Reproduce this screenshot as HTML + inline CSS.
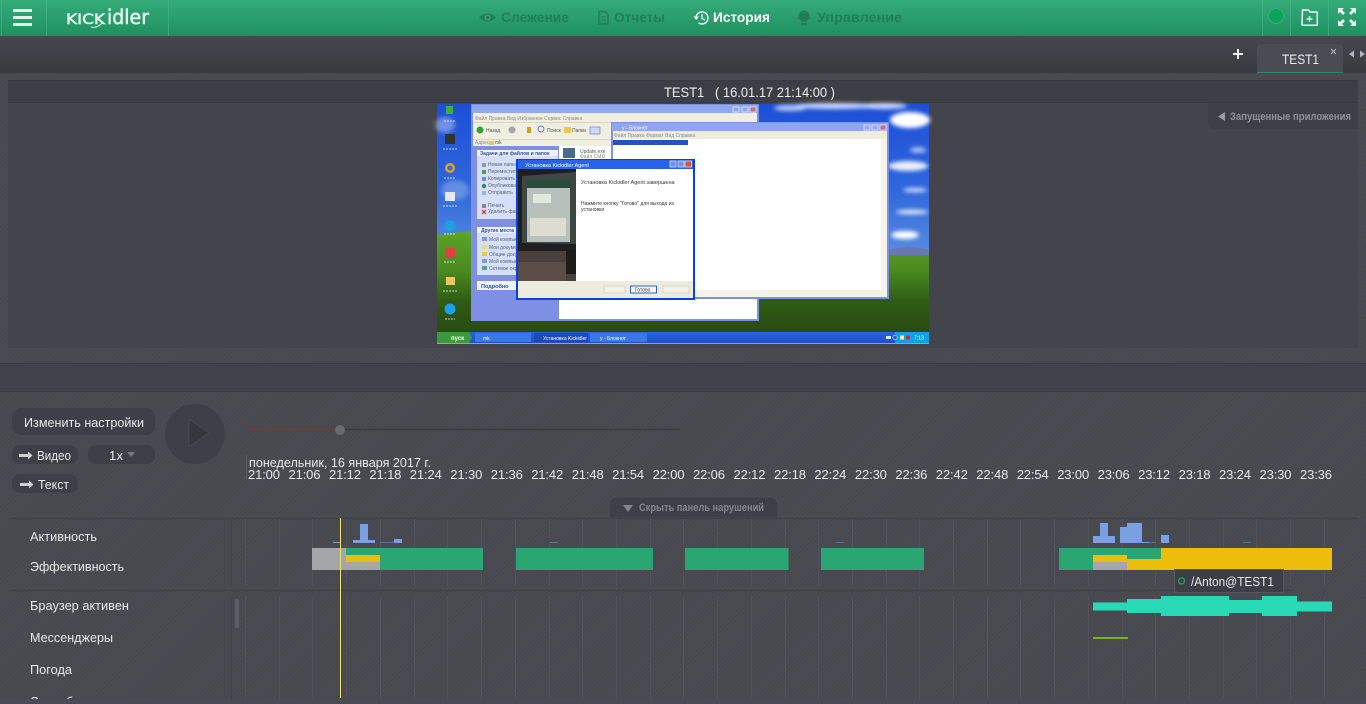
<!DOCTYPE html>
<html lang="ru"><head><meta charset="utf-8"><title>Kickidler</title>
<style>
html,body{margin:0;padding:0;width:1366px;height:704px;overflow:hidden;background:#4a4b53}
.a{position:absolute}
.st{background:#4a4b53 repeating-linear-gradient(135deg,#4b4c54 0 1px,#48494f 1px 3px)}
svg{position:absolute;left:0;top:0}
text{font-family:"Liberation Sans","DejaVu Sans",sans-serif;font-size:13px;fill:#e8e8ea}
.n{font-family:"Liberation Sans",sans-serif;font-weight:bold;font-size:14px;fill:#217f56}
.b{font-family:"Liberation Sans",sans-serif;font-weight:bold;font-size:11px}
.x{font-size:5px;fill:#223}
</style></head><body>
<div class="a st" style="left:0;top:0;width:1366px;height:704px"></div>
<div class="a" style="left:0;top:0;width:1366px;height:36px;background:linear-gradient(#35ab79,#1f9160)"></div>
<div class="a" style="left:0;top:36px;width:1366px;height:37px;background:linear-gradient(#47484f,#393a40)"></div>
<div class="a" style="left:8px;top:80px;width:1350px;height:23px;background:#3e3f46;border-top:1px solid #393a40;box-sizing:border-box;border-bottom:1px solid #393a40"></div>
<div class="a" style="left:8px;top:103px;width:1350px;height:245px;background:#44454c"></div>
<div class="a" style="left:0;top:363px;width:1366px;height:29px;background:#42434a;border-top:1px solid #3a3b41;border-bottom:1px solid #3c3d43;box-sizing:border-box"></div>

<svg width="1366" height="704" viewBox="0 0 1366 704">
<defs>
<linearGradient id="sky" x1="0" y1="0" x2="0" y2="1"><stop offset="0" stop-color="#1d4fd6"/><stop offset=".35" stop-color="#2f66dc"/><stop offset=".65" stop-color="#5a8fe0"/><stop offset="1" stop-color="#7fa6e0"/></linearGradient>
<linearGradient id="gr" x1="0" y1="0" x2="0" y2="1"><stop offset="0" stop-color="#5ea52a"/><stop offset=".4" stop-color="#4a8a20"/><stop offset=".7" stop-color="#2f5c14"/><stop offset="1" stop-color="#2a4a12"/></linearGradient>
<linearGradient id="tb" x1="0" y1="0" x2="0" y2="1"><stop offset="0" stop-color="#2a62e0"/><stop offset="1" stop-color="#1f4fc8"/></linearGradient>
<filter id="bl" x="-30%" y="-60%" width="160%" height="220%"><feGaussianBlur stdDeviation="2"/></filter>
</defs>

<!-- header -->
<path d="M1.5 0V36M46.5 0V36M168.5 0V36M1262.5 0V36M1290.5 0V36M1328.5 0V36" stroke="#4dba8b" stroke-opacity=".55"/>
<path d="M13 9h19v3H13zM13 16h19v3H13zM13 23h19v3H13z" fill="#e4f1ea"/>
<text x="66" y="24" style="font-family:'DejaVu Sans',sans-serif;font-size:14.5px;fill:#e4f2eb;stroke:#e4f2eb;stroke-width:.5" textLength="39" lengthAdjust="spacingAndGlyphs">KICK</text>
<text x="107" y="24" style="font-family:'DejaVu Sans',sans-serif;font-size:20px;fill:#e4f2eb;stroke:#e4f2eb;stroke-width:.5" textLength="42" lengthAdjust="spacingAndGlyphs">idler</text>
<path d="M91 27q6 2 12-5" stroke="#e4f2eb" fill="none"/>
<!-- nav -->
<path d="M479 17.500q8.500-8 17 0q-8.500 8-17 0z" fill="#217f56"/><circle cx="487.500" cy="17.500" r="3" fill="#35a877"/><circle cx="487.500" cy="17.500" r="1.700" fill="#217f56"/>
<text class="n" x="501" y="22" textLength="68" lengthAdjust="spacingAndGlyphs">Слежение</text>
<path d="M599 11.500h6l3 3v9.500h-9z" fill="none" stroke="#217f56" stroke-width="1.500"/><path d="M601 17h5M601 20h5" stroke="#217f56"/>
<text class="n" x="614" y="22" textLength="51" lengthAdjust="spacingAndGlyphs">Отчеты</text>
<path d="M696 18a6 6 0 1 1 2.500 4.800" fill="none" stroke="#fff" stroke-width="1.300"/><path d="M693.500 16.500h5.500l-2.700 3.500z" fill="#fff"/><path d="M702 14v4.500l3 1.500" fill="none" stroke="#fff" stroke-width="1.100"/>
<text class="n" style="fill:#fff" x="713" y="22" textLength="57" lengthAdjust="spacingAndGlyphs">История</text>
<circle cx="804" cy="17" r="5" fill="#217f56"/><path d="M798 17a6 6.500 0 0 1 12 0v2h-1.500v-2a4.500 5 0 0 0-9 0v2H798zM801 23h6v2h-6z" fill="#217f56"/>
<text class="n" x="817" y="22" textLength="85" lengthAdjust="spacingAndGlyphs">Управление</text>
<!-- right header -->
<circle cx="1276" cy="16" r="7.500" fill="#0ea35d" stroke="#2fb27d"/>
<path d="M1302.500 10h6l1.500 2h6.500a.8.8 0 0 1 .8.8v11.700a.8.8 0 0 1-.8.800h-13.700a.8.800 0 0 1-.8-.800z" fill="none" stroke="#f0f7f3" stroke-width="1.500"/>
<path d="M1309.500 16v6M1306.500 19h6" stroke="#fff" stroke-width="1.300"/>
<path d="M1338 8h6l-2 2 3 3-2 2-3-3-2 2zM1356 8h-6l2 2-3 3 2 2 3-3 2 2zM1338 26h6l-2-2 3-3-2-2-3 3-2-2zM1356 26h-6l2-2-3-3 2-2 3 3 2-2z" fill="#e8f3ed"/>

<!-- tabs -->
<path d="M1238 49v10M1233 54h10" stroke="#eee" stroke-width="2"/>
<path d="M1257 72V47a3 3 0 0 1 3-3h80a3 3 0 0 1 3 3v25z" fill="#4a4b53"/>
<path d="M1257 72.500h86" stroke="#2b8a63"/>
<text x="1282" y="64" textLength="37" lengthAdjust="spacingAndGlyphs" style="font-size:14px;fill:#eceded">TEST1</text>
<path d="M1331 49l5 5M1336 49l-5 5" stroke="#b8b9bd"/>
<path d="M1354 50.500v7l-5-3.500zM1360 50.500v7l5-3.500z" fill="#b5b6ba"/>
<text x="664" y="97" textLength="171" lengthAdjust="spacingAndGlyphs" style="font-size:14px;fill:#eee" xml:space="preserve">TEST1   ( 16.01.17 21:14:00 )</text>
<!-- running apps -->
<path d="M1208 103h150v26h-144a6 6 0 0 1-6-6z" fill="#3f4047"/>
<path d="M1225 112v9l-7-4.500z" fill="#9a9b9f"/>
<text class="b" style="fill:#909196" x="1230" y="120" textLength="121" lengthAdjust="spacingAndGlyphs">Запущенные приложения</text>

<!-- XP screen -->
<rect x="437" y="104" width="492" height="240" fill="url(#sky)"/>
<path d="M437 235q60-10 140 0t352 20v77H437z" fill="url(#gr)"/>
<g fill="#fff" filter="url(#bl)">
<ellipse cx="790" cy="108" rx="16" ry="3" opacity=".7"/><ellipse cx="835" cy="106" rx="40" ry="3" opacity=".8"/><ellipse cx="885" cy="106" rx="22" ry="3" opacity=".8"/><ellipse cx="910" cy="120" rx="20" ry="8"/>
<ellipse cx="918" cy="150" rx="8" ry="3" opacity=".6"/><ellipse cx="908" cy="166" rx="20" ry="5" opacity=".9"/><ellipse cx="915" cy="190" rx="12" ry="2.500" opacity=".7"/>
<ellipse cx="912" cy="212" rx="16" ry="2.500" opacity=".8"/><ellipse cx="905" cy="235" rx="14" ry="4"/>
<ellipse cx="445" cy="125" rx="10" ry="8" opacity=".35"/><ellipse cx="455" cy="190" rx="14" ry="10" opacity=".25"/>
</g>
<path d="M889 250q20-6 40 0v5h-40z" fill="#6a78b0"/>
<!-- desktop icons -->
<g>
<rect x="446" y="106" width="7" height="8" fill="#3fae3f"/><rect x="445" y="134" width="10" height="10" fill="#333"/><circle cx="450" cy="168" r="5" fill="#e0a020"/><circle cx="450" cy="168" r="2.500" fill="#2a70d8"/>
<rect x="445" y="192" width="10" height="9" fill="#e8e8f0"/><circle cx="450" cy="226" r="5.500" fill="#1ca0e0"/><rect x="445" y="248" width="10" height="10" fill="#e04040"/>
<rect x="446" y="277" width="9" height="8" fill="#e8c860"/><circle cx="450" cy="309" r="5.500" fill="#1ca0e8"/>
</g>
<path d="M444 121h12M443 149h14M444 178h12M443 206h14M444 234h12M444 262h12M443 291h14M445 319h10" stroke="#dfe8f8" stroke-opacity=".7" stroke-dasharray="2 1" stroke-width="1.200"/>
<!-- taskbar -->
<rect x="437" y="332" width="492" height="11" fill="url(#tb)"/>
<path d="M437 332h32l3 5.500-3 5.500h-32z" fill="#3c9a3c"/>
<text x="451" y="340" style="font-size:6px;font-weight:bold;fill:#fff">пуск</text>
<rect x="475" y="333" width="56" height="9" fill="#3a78e8"/><rect x="534" y="333" width="54" height="9" fill="#1c4ab8"/><rect x="590" y="333" width="57" height="9" fill="#3a78e8"/>
<rect x="895" y="332" width="34" height="11" fill="#11a0e8"/>
<text class="x" style="fill:#fff" x="483" y="340">mk</text><text class="x" style="fill:#fff" x="543" y="340">Установка Kickidler</text><text class="x" style="fill:#fff" x="600" y="340">y - Блокнот</text>
<rect x="886" y="336" width="5" height="3" fill="#dfe8f8"/><circle cx="895" cy="337.500" r="2.200" fill="#1a60c8" stroke="#cfe8ff" stroke-width=".6"/><rect x="900" y="335.500" width="4" height="4" fill="#f0f0a0"/><circle cx="908" cy="337.500" r="2" fill="#d82030"/>
<text class="x" style="fill:#fff" x="914" y="339.500">7:13</text>

<!-- explorer -->
<rect x="471" y="104" width="288" height="217" fill="#7f8fe4"/>
<rect x="472" y="105" width="286" height="8" fill="#8fa8ee"/>
<rect x="473" y="113" width="284" height="33" fill="#f0eee0"/>
<path d="M473 122.500h284M473 139.500h284" stroke="#d8d5c0"/>
<text class="x" x="475" y="120" style="fill:#889">Файл  Правка  Вид  Избранное  Сервис  Справка</text>
<circle cx="480" cy="130" r="3.500" fill="#30a030"/><circle cx="512" cy="130" r="3.500" fill="#a8a8a8"/><rect x="527" y="127" width="4" height="6" fill="#d0a020"/><circle cx="541" cy="129" r="3" fill="none" stroke="#6080c0"/><rect x="564" y="127" width="7" height="6" fill="#e8c850"/><rect x="590" y="127" width="10" height="7" fill="#d0d8f0" stroke="#5070c0" stroke-width=".6"/>
<text class="x" x="486" y="132" style="fill:#555">Назад</text><text class="x" x="547" y="132" style="fill:#555">Поиск</text><text class="x" x="572" y="132" style="fill:#555">Папки</text>
<text class="x" x="475" y="144" style="fill:#888">Адрес</text><rect x="489" y="141" width="5" height="4" fill="#e8c850"/><text class="x" x="495" y="144" style="fill:#555">mk</text>
<rect x="559" y="146" width="198" height="173" fill="#fff"/>
<rect x="477" y="150" width="81" height="6" fill="#eff3fe"/><rect x="477" y="156" width="81" height="63" fill="#d6dff7"/>
<text x="480" y="155" style="font-size:5px;font-weight:bold;fill:#2a50a8">Задачи для файлов и папок</text>
<g><text class="x" x="488" y="166" style="fill:#567">Новая папка</text><text class="x" x="488" y="173" style="fill:#567">Переместить</text><text class="x" x="488" y="180" style="fill:#567">Копировать</text><text class="x" x="488" y="187" style="fill:#567">Опубликовать</text><text class="x" x="488" y="194" style="fill:#567">Отправить</text><text class="x" x="488" y="207" style="fill:#567">Печать</text><text class="x" x="488" y="213" style="fill:#567">Удалить файл</text></g>
<g><rect x="482" y="163" width="4" height="4" fill="#8898c8"/><rect x="482" y="170" width="4" height="4" fill="#50a040"/><rect x="482" y="177" width="4" height="4" fill="#7090d0"/><circle cx="484" cy="186" r="2.200" fill="#309050"/><rect x="482" y="191" width="4" height="4" fill="#9fb0d8"/><rect x="482" y="204" width="4" height="4" fill="#888"/><path d="M482 210l4 4M486 210l-4 4" stroke="#d02020"/></g>
<rect x="477" y="227" width="81" height="6" fill="#eff3fe"/><rect x="477" y="233" width="81" height="42" fill="#d6dff7"/>
<text x="481" y="232" style="font-size:5px;font-weight:bold;fill:#2a50a8">Другие места</text>
<text class="x" x="489" y="241" style="fill:#567">Мой компьютер</text><text class="x" x="489" y="249" style="fill:#567">Мои документы</text><text class="x" x="489" y="256" style="fill:#567">Общие документы</text><text class="x" x="489" y="263" style="fill:#567">Мой компьютер</text><text class="x" x="489" y="270" style="fill:#567">Сетевое окружение</text>
<rect x="482" y="237" width="5" height="4" fill="#8898c8"/><rect x="482" y="245" width="5" height="4" fill="#e8d890"/><rect x="482" y="252" width="5" height="4" fill="#e8c850"/><rect x="482" y="259" width="5" height="4" fill="#8898c8"/><rect x="482" y="266" width="5" height="4" fill="#50a0a0"/>
<rect x="477" y="281" width="81" height="9" fill="#eff3fe"/>
<text x="481" y="288" style="font-size:5.500px;font-weight:bold;fill:#2a50a8">Подробно</text>
<rect x="563" y="148" width="12" height="10" fill="#4a6a8a"/>
<text class="x" x="580" y="153" style="fill:#555">Update.exe</text><text class="x" x="580" y="158" style="fill:#888">Файл CMD</text>
<rect x="733" y="107" width="6" height="5" fill="#90a8ee" stroke="#fff" stroke-width=".6"/><rect x="742" y="107" width="6" height="5" fill="#90a8ee" stroke="#fff" stroke-width=".6"/><rect x="750" y="107" width="6" height="5" fill="#c07080" stroke="#fff" stroke-width=".6"/>
<!-- notepad -->
<rect x="611" y="122" width="278" height="177" fill="#7b8fe6"/>
<rect x="612" y="123" width="276" height="8" fill="#8ea6ee"/>
<rect x="613" y="131" width="274" height="8" fill="#eeecdc"/>
<text class="x" x="614" y="137" style="fill:#889">Файл  Правка  Формат  Вид  Справка</text>
<text class="x" style="fill:#fff" x="622" y="129.500">y - Блокнот</text>
<rect x="613" y="139" width="274" height="158" fill="#fff"/>
<rect x="613" y="140" width="75" height="5" fill="#2850c0"/>
<rect x="881" y="139" width="6" height="158" fill="#f4f3ea"/><rect x="613" y="290" width="274" height="7" fill="#f4f3ea"/>
<rect x="864" y="125" width="6" height="5" fill="#90a8ee" stroke="#fff" stroke-width=".6"/><rect x="872" y="125" width="6" height="5" fill="#90a8ee" stroke="#fff" stroke-width=".6"/><rect x="880" y="125" width="6" height="5" fill="#c07080" stroke="#fff" stroke-width=".6"/>
<!-- installer -->
<rect x="516" y="159" width="179" height="141" fill="#0b3fe0"/>
<rect x="518" y="160" width="175" height="9" fill="#2a62ea"/>
<text x="525" y="167" style="font-size:5.500px;fill:#fff">Установка Kickidler Agent</text>
<rect x="518" y="169" width="175" height="112" fill="#fff"/>
<rect x="518" y="169" width="58" height="112" fill="#4a3f3a"/>
<rect x="518" y="169" width="58" height="82" fill="#1e1f1e"/>
<path d="M522 176l54-4v72l-54-1z" fill="#3c4844"/><rect x="527" y="180" width="43" height="62" fill="#b9c0bb"/><rect x="527" y="180" width="43" height="8" fill="#2a4a3c"/>
<rect x="533" y="194" width="18" height="9" fill="#dfe8df"/><rect x="530" y="218" width="36" height="18" fill="#dcdcd2"/>
<rect x="566" y="250" width="10" height="24" fill="#1c1c1c"/>
<rect x="518" y="262" width="48" height="19" fill="#5a4c46"/>
<text x="581" y="184" style="font-size:5.500px;fill:#333">Установка Kickidler Agent завершена</text>
<text class="x" x="581" y="205" style="fill:#333">Нажмите кнопку "Готово" для выхода из</text><text class="x" x="581" y="211" style="fill:#333">установки</text>
<rect x="518" y="281" width="175" height="17" fill="#ecebdd"/>
<rect x="604" y="286" width="21" height="7" fill="#f2f1e8" stroke="#c0c0b0" stroke-width=".5"/><rect x="630.500" y="286" width="26" height="7" fill="#f5f5f0" stroke="#3060c8"/><rect x="663" y="286" width="26" height="7" fill="#f2f1e8" stroke="#c0c0b0" stroke-width=".5"/>
<text class="x" x="635" y="291.500" style="fill:#444">Готово</text>
<rect x="670" y="161" width="6" height="6" fill="#6f90ee" stroke="#fff" stroke-width=".6"/><rect x="678" y="161" width="6" height="6" fill="#6f90ee" stroke="#fff" stroke-width=".6"/><rect x="685" y="161" width="6.500" height="6" fill="#e05030" stroke="#fff" stroke-width=".6"/>

<!-- controls -->
<rect x="12" y="408" width="143" height="27" rx="9" fill="#3f4047"/>
<text x="24" y="427" textLength="120" lengthAdjust="spacingAndGlyphs" style="font-size:13px">Изменить настройки</text>
<rect x="12" y="445" width="66" height="19" rx="8" fill="#3f4047"/><rect x="88" y="445" width="67" height="19" rx="8" fill="#3f4047"/><rect x="12" y="474" width="66" height="19" rx="8" fill="#3f4047"/>
<path d="M19 454h9v-2.500l4.500 4-4.500 4V457h-9z" fill="#d0d0d2"/><path d="M20 483h9v-2.500l4.500 4-4.500 4V486h-9z" fill="#d0d0d2"/>
<text x="37" y="460" textLength="34" lengthAdjust="spacingAndGlyphs">Видео</text>
<text x="38" y="489" textLength="31" lengthAdjust="spacingAndGlyphs">Текст</text>
<text x="109" y="460" textLength="14">1x</text>
<path d="M127 452h8l-4 5z" fill="#77787e"/>
<circle cx="195" cy="434" r="30" fill="#3f4047"/>
<path d="M189 419l20 14-20 14z" fill="#37383e" stroke="#4b4c53" stroke-width=".8"/>
<path d="M247 429.500h93" stroke="#8c3035" stroke-width="1.500"/>
<path d="M345 429.500h335" stroke="#3a3b40" stroke-width="1.400"/>
<circle cx="340" cy="430" r="5" fill="#696a70"/>
<path d="M246.500 455v24" stroke="#5a5b62"/>
<text x="249" y="467" textLength="182" lengthAdjust="spacingAndGlyphs">понедельник, 16 января 2017 г.</text>
<g>
<text x="248" y="479" textLength="32">21:00</text><text x="288.500" y="479" textLength="32">21:06</text><text x="329" y="479" textLength="32">21:12</text><text x="369.400" y="479" textLength="32">21:18</text><text x="409.800" y="479" textLength="32">21:24</text><text x="450.300" y="479" textLength="32">21:30</text><text x="490.800" y="479" textLength="32">21:36</text><text x="531.200" y="479" textLength="32">21:42</text><text x="571.700" y="479" textLength="32">21:48</text><text x="612.100" y="479" textLength="32">21:54</text><text x="652.600" y="479" textLength="32">22:00</text><text x="693" y="479" textLength="32">22:06</text><text x="733.500" y="479" textLength="32">22:12</text><text x="774" y="479" textLength="32">22:18</text><text x="814.400" y="479" textLength="32">22:24</text><text x="854.900" y="479" textLength="32">22:30</text><text x="895.400" y="479" textLength="32">22:36</text><text x="935.800" y="479" textLength="32">22:42</text><text x="976.300" y="479" textLength="32">22:48</text><text x="1016.700" y="479" textLength="32">22:54</text><text x="1057.200" y="479" textLength="32">23:00</text><text x="1097.600" y="479" textLength="32">23:06</text><text x="1138.100" y="479" textLength="32">23:12</text><text x="1178.600" y="479" textLength="32">23:18</text><text x="1219" y="479" textLength="32">23:24</text><text x="1259.500" y="479" textLength="32">23:30</text><text x="1300" y="479" textLength="32">23:36</text>
</g>

<!-- hide tab -->
<path d="M609 518v-13a8 8 0 0 1 8-8h153a8 8 0 0 1 8 8v13z" fill="#3f4047" stroke="#4e4f56"/>
<path d="M623 505h10l-5 7z" fill="#85868b"/>
<text class="b" style="fill:#85868b" x="639" y="511" textLength="125" lengthAdjust="spacingAndGlyphs">Скрыть панель нарушений</text>

<!-- separators and grid -->
<path d="M10 518.500h1348M10 590.500h1283" stroke="#424349" stroke-width="1.200"/>
<path stroke="#52535a" d="M245.500 519V586M279.500 519V586M312.500 519V586M346.500 519V586M380.500 519V586M414.500 519V586M447.500 519V586M481.500 519V586M515.500 519V586M549.500 519V586M582.500 519V586M616.500 519V586M650.500 519V586M683.500 519V586M717.500 519V586M751.500 519V586M785.500 519V586M818.500 519V586M852.500 519V586M886.500 519V586M919.500 519V586M953.500 519V586M987.500 519V586M1020.500 519V586M1054.500 519V586M1088.500 519V586M1122.500 519V586M1155.500 519V586M1189.500 519V586M1223.500 519V586M1256.500 519V586M1290.500 519V586M1324.500 519V586"/>
<path stroke="#52535a" d="M245.500 596V700M279.500 596V700M312.500 596V700M346.500 596V700M380.500 596V700M414.500 596V700M447.500 596V700M481.500 596V700M515.500 596V700M549.500 596V700M582.500 596V700M616.500 596V700M650.500 596V700M683.500 596V700M717.500 596V700M751.500 596V700M785.500 596V700M818.500 596V700M852.500 596V700M886.500 596V700M919.500 596V700M953.500 596V700M987.500 596V700M1020.500 596V700M1054.500 596V700M1088.500 596V700M1122.500 596V700M1155.500 596V700M1189.500 596V700M1223.500 596V700M1256.500 596V700M1290.500 596V700M1324.500 596V700"/>
<path stroke="#43444a" d="M231.500 519V586M231.500 596V700"/>
<rect x="235" y="599" width="4" height="29" rx="2" fill="#5f6067"/>

<!-- labels -->
<text x="30" y="541" textLength="67" lengthAdjust="spacingAndGlyphs">Активность</text>
<text x="30" y="571" textLength="94" lengthAdjust="spacingAndGlyphs">Эффективность</text>
<text x="30" y="610" textLength="99" lengthAdjust="spacingAndGlyphs">Браузер активен</text>
<text x="30" y="642" textLength="83" lengthAdjust="spacingAndGlyphs">Мессенджеры</text>
<text x="30" y="674" textLength="42" lengthAdjust="spacingAndGlyphs">Погода</text>
<text x="30" y="706" textLength="65" lengthAdjust="spacingAndGlyphs">Служебные</text>

<!-- activity -->
<g fill="#7b9fe3">
<rect x="333" y="542" width="7.500" height="1"/><rect x="353" y="540" width="22" height="3"/><rect x="360" y="524" width="8" height="19"/><rect x="380" y="542" width="14" height="1" fill="#5d6f95"/><rect x="394" y="539" width="8" height="4"/>
<rect x="550" y="542" width="8" height="1" fill="#5d6f95"/><rect x="836" y="542" width="8" height="1" fill="#5d6f95"/>
<rect x="1093" y="536" width="22" height="7"/><rect x="1100" y="523" width="8" height="20"/><rect x="1120" y="527" width="9" height="16"/><rect x="1127" y="523" width="15" height="20"/><rect x="1142" y="542" width="7" height="1"/><rect x="1149" y="542" width="7" height="1" fill="#5d6f95"/><rect x="1161" y="535" width="8" height="8"/><rect x="1243" y="542" width="8" height="1" fill="#5d6f95"/>
</g>
<!-- efficiency -->
<rect x="312" y="548" width="34" height="22" fill="#a5a6aa"/>
<rect x="346" y="548" width="137" height="22" fill="#2aa574"/>
<rect x="346" y="555" width="34" height="7" fill="#ecbd0b"/><rect x="346" y="562" width="34" height="8" fill="#a5a6aa"/>
<rect x="516" y="548" width="137" height="22" fill="#2aa574"/><rect x="685" y="548" width="103.500" height="22" fill="#2aa574"/><rect x="821" y="548" width="103" height="22" fill="#2aa574"/>
<rect x="1059" y="548" width="102" height="22" fill="#2aa574"/>
<rect x="1093" y="555" width="34" height="7" fill="#ecbd0b"/><rect x="1093" y="562" width="34" height="8" fill="#a5a6aa"/>
<rect x="1127" y="559" width="34" height="11" fill="#ecbd0b"/><rect x="1161" y="548" width="171" height="22" fill="#ecbd0b"/>
<!-- teal -->
<path d="M1093 602.500h34V599h34v-3h68v4h33v-4h35v5.500h35v10h-35v4.500h-35v-3h-33v3h-68v-3h-34v-2.500h-34z" fill="#28d9b6"/>
<rect x="1093" y="637" width="35" height="2" fill="#7ab51d"/>
<!-- tooltip -->
<rect x="1174.500" y="569.500" width="109" height="23" fill="#3e3f46" stroke="#56575d"/>
<circle cx="1181.500" cy="581" r="3" fill="none" stroke="#2a9a6c" stroke-width="1.300"/>
<text x="1191" y="586" textLength="83" lengthAdjust="spacingAndGlyphs">/Anton@TEST1</text>
<!-- cursor -->
<path d="M340.500 518V698" stroke="#f2e26a"/>
<rect x="0" y="699" width="1366" height="5" fill="#4a4b53"/>
</svg>
</body></html>
